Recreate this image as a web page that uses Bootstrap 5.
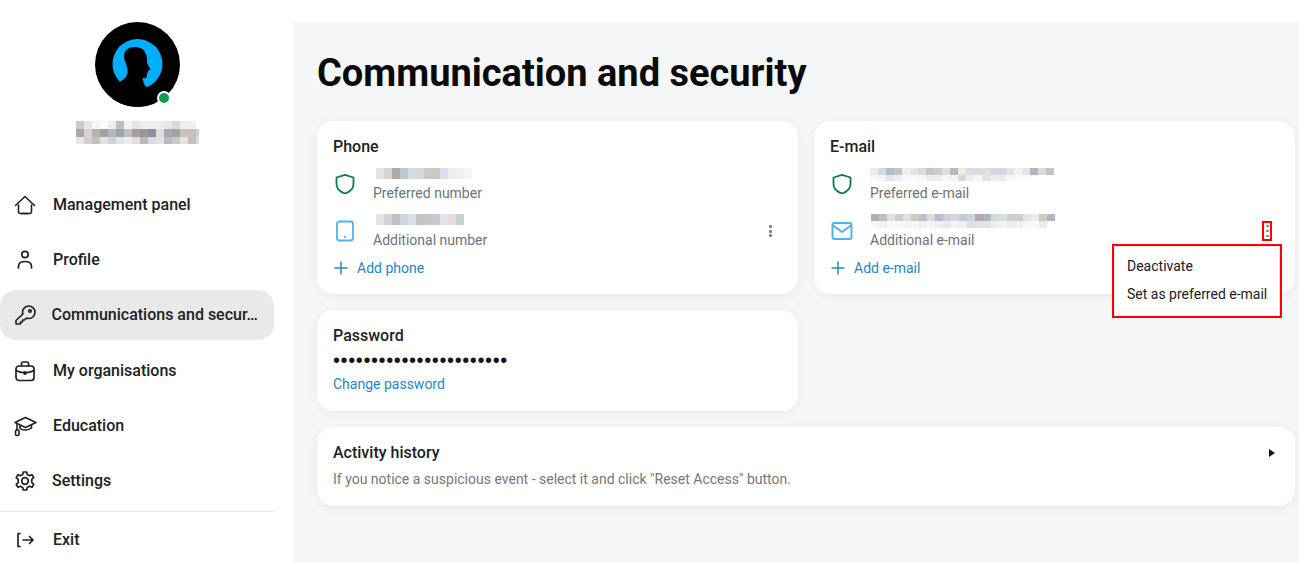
<!DOCTYPE html>
<html lang="en">
<head>
<meta charset="UTF-8">
<title>Communication and security</title>
<link href="https://cdn.jsdelivr.net/npm/bootstrap@5.3.2/dist/css/bootstrap.min.css" rel="stylesheet">
<style>
    html, body { height: 100%; }
    body {
        font-family: Roboto, "Liberation Sans", sans-serif;
        color: #212121;
        background: #fff;
        overflow: hidden;
    }
    .app-shell { height: 562px; }

    /* sidebar */
    .side-col { width: 293px; flex: none; padding: 22px 19px 0 0; }
    .avatar-wrap { width: 85px; height: 85px; position: relative; }
    .avatar-dot {
        position: absolute; left: 62px; top: 69px;
        width: 14px; height: 14px; border-radius: 50%;
        background: #0b9e58; border: 2px solid #fff;
    }
    .name-pix { margin: 14px 0 36px; height: 23px; }
    .side-link {
        display: flex; align-items: center; height: 50px; margin-bottom: 5px;
        padding: 0 13px; border-radius: 16px;
        font-size: 16px; font-weight: 500; color: #212121; text-decoration: none;
    }
    .side-link svg { width: 24px; height: 24px; flex: none; margin-right: 16px; }
    .side-link.is-active { background: #e9e9e9; margin-bottom: 6px; }
    .side-link.is-active svg { margin-right: 14.5px; }
    .side-link.is-settings svg { margin-right: 15px; }
    .side-text { white-space: nowrap; }
    .side-rule { border-top: 1px solid #e8e8e8; margin: 5px 0 3px; }

    /* main area */
    .main-col { flex: 1; min-width: 0; margin-top: 22px; background: #f5f6f8; padding: 27px 4px 0 24px; }
    .page-title { font-size: 38px; font-weight: 700; line-height: 48px; color: #0a0a0a; margin: 0 0 24px; }
    .cards-grid { display: grid; grid-template-columns: 481px 481px; column-gap: 16px; row-gap: 16px; align-items: start; }
    .info-card {
        position: relative; background: #fff; border-radius: 16px; padding: 17px 16px 16px;
        box-shadow: 0 2px 8px rgba(40, 50, 70, .07);
    }
    .card-phone { height: 173px; }
    .card-pass { height: 101px; }
    .card-history { grid-column: 1 / 3; height: 79px; }
    .card-name { font-size: 16px; font-weight: 500; line-height: 18px; color: #212121; }
    .contact-row { display: flex; height: 47px; position: relative; }
    .contact-row svg.row-icon { width: 24px; height: 24px; flex: none; margin: 12px 16px 0 0; }
    .row-text { flex: 1; min-width: 0; padding-top: 3px; }
    .row-pix { display: block; height: 18px; margin-bottom: 2px; }
    .row-label { font-size: 14px; line-height: 20px; color: #6e7278; }
    .kebab {
        position: absolute; top: 16px; display: flex; flex-direction: column; gap: 1.5px; padding: 2px;
    }
    .kebab span { width: 3px; height: 3px; background: #808080; border-radius: 1px; display: block; }
    .kebab-phone { right: 8px; }
    .kebab-mail { right: 7px; top: 14px; padding: 2px 1.5px; gap: 2.6px; border: 2px solid #f00; width: 10px; height: 20px; align-items: center; justify-content: center; }
    .add-link { display: flex; align-items: center; font-size: 14px; color: #2288c4; text-decoration: none; line-height: 20px; margin-top: 4px; }
    .add-link svg { width: 16px; height: 16px; margin-right: 8px; }
    .pass-dots { font-family: "Liberation Sans", sans-serif; font-size: 20px; line-height: 18px; letter-spacing: .6px; color: #151515; margin: 6px 0 3px; white-space: nowrap; }
    .plain-link { font-size: 14px; color: #2288c4; text-decoration: none; line-height: 20px; }
    .history-head { display: flex; justify-content: space-between; align-items: center; }
    .caret-right { width: 0; height: 0; border-left: 6px solid #111; border-top: 4.5px solid transparent; border-bottom: 4.5px solid transparent; margin-right: 4px; }
    .history-note { font-size: 14px; line-height: 20px; color: #777; margin-top: 7px; }

    /* context menu, framed in red in the picture */
    .ctx-menu.dropdown-menu {
        display: block; position: absolute; left: 298px; top: 123px; width: 170px; height: 74px; min-width: 0;
        padding: 6px 0 0; background: #fff; border: 2px solid #f00; border-radius: 0;
        box-shadow: inset 0 0 0 1px #e8e8e8; z-index: 5;
    }
    .ctx-menu .dropdown-item { padding: 0 13px; height: 28px; line-height: 28px; font-size: 14px; color: #212121; }
</style>
</head>
<body>
<div class="app-shell d-flex">

    <aside class="side-col">
        <div class="d-flex flex-column align-items-center">
            <div class="avatar-wrap">
                <svg width="85" height="85" viewBox="0 0 85 85">
                    <defs><clipPath id="avatarClip"><circle cx="42.5" cy="42.5" r="42.5"/></clipPath></defs>
                    <circle cx="42.5" cy="42.5" r="42.5" fill="#000"/>
                    <circle cx="42.5" cy="42" r="25" fill="#00aeff"/>
                    <path clip-path="url(#avatarClip)" fill="#000" d="M41 25C34 24.500 29 28 29 34C29 38 31 41 32 45C33 50 33 53 30 56L20 64L15 85L62 85L55 70L49 62L47.500 56C50 56.500 52 56 52 53C52 51 53 50 53 49L55.500 47.500L52 41C52.500 35 51 31 48 27.500C46 26 44 25.500 41 25Z"/>
                </svg>
                <span class="avatar-dot"></span>
            </div>
            <svg class="name-pix pix-block" width="123" height="23" data-size="8" data-rows="d0cbc8,e4e4ea,f4f4f2,ffffff,eeeeee,bcbfca,f3f6f9,e6e6e8,f0eeee,eceef2,ecedf0,efe6e2,dcd8dc,f0f0f2,f0f0f2,ffffff|a9a6a8,d5d0cb,b5b2b6,a9a098,b4b8b8,9aa5ac,c5bdb8,a89f9a,a0958e,8a90a0,e0dcd6,a8a8b2,98a8aa,c8c2b8,cac2ba,d4cdc8|e6e6e6,d4cdc8,c6c0bc,e0e0de,ccd2da,e2e4e4,eaeae6,e0dfe0,b8b8c2,d8d8de,e0e2e8,bcbcbe,cec6c2,e0e4e2,c4bebe,d4dce6"></svg>
        </div>

        <nav>
            <a class="side-link" href="#">
                <svg viewBox="0 0 24 24" fill="none" stroke="#212121" stroke-width="1.6" stroke-linejoin="round" stroke-linecap="round"><path d="M2.500 12.500L12 3.500L21.500 12.500"/><path d="M5.500 12V18.500C5.500 19.800 6.200 20.500 7.500 20.500H16.500C17.800 20.500 18.500 19.800 18.500 18.500V12"/><path d="M8.500 20.500H15.500"/></svg>
                <span class="side-text">Management panel</span>
            </a>
            <a class="side-link" href="#">
                <svg viewBox="0 0 24 24" fill="none" stroke="#212121" stroke-width="1.7" stroke-linecap="round"><circle cx="12" cy="6.500" r="3.200"/><path d="M5.500 20V18.500C5.500 15.500 8 13.500 12 13.500S18.500 15.500 18.500 18.500V20"/></svg>
                <span class="side-text">Profile</span>
            </a>
            <a class="side-link is-active" href="#">
                <svg viewBox="0 0 24 24" fill="none" stroke="#212121" stroke-width="1.6" stroke-linejoin="round" stroke-linecap="round"><path d="M9.500 9.500C9.500 5.800 12.300 3 15.800 3S22 5.800 22 9.300S19.300 15.500 15.800 15.500C14.900 15.500 14.100 15.300 13.400 15L11.500 17H9.500V19H7.500V21H3V17.500L10 10.800C9.700 10.400 9.500 10 9.500 9.500Z"/><circle cx="17" cy="8" r="1.300"/></svg>
                <span class="side-text">Communications and secur…</span>
            </a>
            <a class="side-link" href="#">
                <svg viewBox="0 0 24 24" fill="none" stroke="#212121" stroke-width="1.7" stroke-linejoin="round" stroke-linecap="round"><rect x="3" y="7" width="18" height="14.500" rx="3"/><path d="M8.500 7V4.500C8.500 3.500 9 3 10 3H14C15 3 15.500 3.500 15.500 4.500V7"/><path d="M3 11.500C8 14.500 16 14.500 21 11.500"/><circle cx="12" cy="14" r="1.100"/></svg>
                <span class="side-text">My organisations</span>
            </a>
            <a class="side-link" href="#">
                <svg viewBox="0 0 24 24" fill="none" stroke="#212121" stroke-width="1.6" stroke-linejoin="round" stroke-linecap="round"><path d="M12.500 3.500L23 8.500L12.500 13.500L2 8.500Z"/><path d="M7 11.500V14.500C9 16.500 15.500 16.500 18.500 14V11"/><path d="M4 9.500V16"/><rect x="2.500" y="16" width="3.500" height="5.500" rx="1.200"/></svg>
                <span class="side-text">Education</span>
            </a>
            <a class="side-link is-settings" href="#">
                <svg viewBox="0 0 24 24" fill="none" stroke="#212121" stroke-width="1.7" stroke-linejoin="round"><circle cx="12" cy="12" r="3.300"/><path d="M10.300 3H13.700L14.300 5.600L16.500 6.700L19 5.700L20.800 8.600L18.800 10.400V13.600L20.800 15.400L19 18.300L16.500 17.300L14.300 18.400L13.700 21H10.300L9.700 18.400L7.500 17.300L5 18.300L3.200 15.400L5.200 13.600V10.400L3.200 8.600L5 5.700L7.500 6.700L9.700 5.600Z"/></svg>
                <span class="side-text">Settings</span>
            </a>
            <div class="side-rule"></div>
            <a class="side-link" href="#">
                <svg viewBox="0 0 24 24" fill="none" stroke="#212121" stroke-width="1.7" stroke-linejoin="round" stroke-linecap="round"><path d="M7 5.500H5V18.500H7"/><path d="M10 12H20M16.500 8.500L20 12L16.500 15.500"/></svg>
                <span class="side-text">Exit</span>
            </a>
        </nav>
    </aside>

    <main class="main-col">
        <h1 class="page-title">Communication and security</h1>

        <div class="cards-grid">
            <section class="info-card card-phone">
                <div class="card-name mb-1">Phone</div>
                <div class="contact-row">
                    <svg class="row-icon" viewBox="0 0 24 24" fill="none" stroke="#0a7d3f" stroke-width="1.800" stroke-linejoin="round"><path d="M12 2.800L20.500 5.500V12C20.500 16.500 16.500 20 12 21.500C7.500 20 3.500 16.500 3.500 12V5.500Z"/></svg>
                    <div class="row-text">
                        <svg class="row-pix pix-block" width="99" height="18" data-x="3" data-y="5" data-h="11" data-size="8" data-rows="e4e4e8,dcd2ce,aeaaa6,bcc8d2,d2dee6,d0d8e4,d0c8c6,ccc8c4,d8e2ec,eaeeee,eef2f2,f2f6f6"></svg>
                        <div class="row-label">Preferred number</div>
                    </div>
                </div>
                <div class="contact-row">
                    <svg class="row-icon" viewBox="0 0 24 24" fill="none" stroke="#4eb3e8" stroke-width="1.800" stroke-linejoin="round"><rect x="4" y="2.500" width="16" height="19" rx="2.500"/><path d="M11.800 18H12.200" stroke-linecap="round"/></svg>
                    <div class="row-text">
                        <svg class="row-pix pix-block" width="99" height="18" data-x="3" data-y="4" data-h="11" data-size="8" data-rows="e4e4e8,dccfcf,bfbfcc,cfd6e0,dbdfe0,c2c6c0,c6c6cc,cac6cc,e0e4ea,e8dcd8,c8d0d0"></svg>
                        <div class="row-label">Additional number</div>
                    </div>
                    <div class="kebab kebab-phone"><span></span><span></span><span></span></div>
                </div>
                <a class="add-link" href="#">
                    <svg viewBox="0 0 16 16" fill="none" stroke="#2288c4" stroke-width="1.500"><path d="M8 1.500V14.500M1.500 8H14.500"/></svg>
                    Add phone
                </a>
            </section>

            <section class="info-card card-phone">
                <div class="card-name mb-1">E-mail</div>
                <div class="contact-row">
                    <svg class="row-icon" viewBox="0 0 24 24" fill="none" stroke="#0a7d3f" stroke-width="1.800" stroke-linejoin="round"><path d="M12 2.800L20.500 5.500V12C20.500 16.500 16.500 20 12 21.500C7.500 20 3.500 16.500 3.500 12V5.500Z"/></svg>
                    <div class="row-text">
                        <svg class="row-pix pix-block" width="184" height="18" data-y="5" data-size="8" data-h="7" data-rows="e6ecee,cfd8da,aebec6,c8c2c0,f0ecea,eae0de,d4dce2,ccc2c6,cccec8,dcdee2,b0bcbe,eeeade,d6dce8,dcdcd4,e0e0d8,d2d8e4,d0d6e4,e2e2dc,f0f0f0,e6e6e6,b2b6c2,e0dada,c6c6c0|fcf4ee,f4f4f6,e0e6ee,ecf0f4,f4f8fa,fafafc,f8f8fa,f0f0ea,eeeee8,f4f6f8,f6f4f0,d8d8d8,eef0f0,fcf8ee,e4e2e0,ecece8,eaeaea,f4f6f8,f8fafc,f8fafc"></svg>
                        <div class="row-label">Preferred e-mail</div>
                    </div>
                </div>
                <div class="contact-row">
                    <svg class="row-icon" viewBox="0 0 24 24" fill="none" stroke="#4eb3e8" stroke-width="2" stroke-linejoin="round"><rect x="2.500" y="4" width="19" height="16" rx="2"/><path d="M3 6.500L12 13L21 6.500"/></svg>
                    <div class="row-text">
                        <svg class="row-pix pix-block" width="186" height="18" data-x="1" data-y="4" data-size="8" data-h="7" data-rows="acacbc,c4bec4,e2e2e2,c8ced2,e0dee2,ccc8bc,bec0cc,dcdcd8,b8bccc,ccd0de,d6d6d2,bccad6,c8d2e0,b4a8a8,a8b8c0,cedcd6,d8e0d8,d0ccd4,ccd0cc,e2e4e8,e8eaee,d4c8c6,b4b4c4|f6f6f6,f2f2f2,fafafa,f8f8f8,f4f4f4,f6f6f2,f0f0f4,f6f6f4,f0f0f4,e8eaf0,f4f4f2,f0f0f4,dcdee8,e4e2e4,e0e4e8,eef0ee,f2f4f2,ececf0,f0f0f4,f8f8f8,f8f8f8,eeeaea,ffffff"></svg>
                        <div class="row-label">Additional e-mail</div>
                    </div>
                    <div class="kebab kebab-mail"><span></span><span></span><span></span></div>
                </div>
                <a class="add-link" href="#">
                    <svg viewBox="0 0 16 16" fill="none" stroke="#2288c4" stroke-width="1.500"><path d="M8 1.500V14.500M1.500 8H14.500"/></svg>
                    Add e-mail
                </a>
                <ul class="dropdown-menu ctx-menu list-unstyled">
                    <li><a class="dropdown-item" href="#">Deactivate</a></li>
                    <li><a class="dropdown-item" href="#">Set as preferred e-mail</a></li>
                </ul>
            </section>

            <section class="info-card card-pass">
                <div class="card-name">Password</div>
                <div class="pass-dots">•••••••••••••••••••••••</div>
                <a class="plain-link" href="#">Change password</a>
            </section>
            <div></div>

            <section class="info-card card-history">
                <div class="history-head">
                    <div class="card-name">Activity history</div>
                    <span class="caret-right"></span>
                </div>
                <div class="history-note">If you notice a suspicious event - select it and click "Reset Access" button.</div>
            </section>
        </div>
    </main>
</div>

<script src="https://cdn.jsdelivr.net/npm/bootstrap@5.3.2/dist/js/bootstrap.bundle.min.js"></script>
<script>
// paints the pixelated (censored) text from the colour lists in data-rows
document.querySelectorAll('.pix-block').forEach(function (svg) {
    const size = Number(svg.dataset.size);
    const rowH = Number(svg.dataset.h || 8);
    const left = Number(svg.dataset.x || 0);
    const top = Number(svg.dataset.y || 0);
    svg.dataset.rows.split('|').forEach(function (row, r) {
        row.split(',').forEach(function (col, c) {
            const rect = document.createElementNS('http://www.w3.org/2000/svg', 'rect');
            rect.setAttribute('x', left + c * size);
            rect.setAttribute('y', top + r * rowH);
            rect.setAttribute('width', size);
            rect.setAttribute('height', rowH);
            rect.setAttribute('fill', '#' + col);
            svg.appendChild(rect);
        });
    });
});
</script>
</body>
</html>
